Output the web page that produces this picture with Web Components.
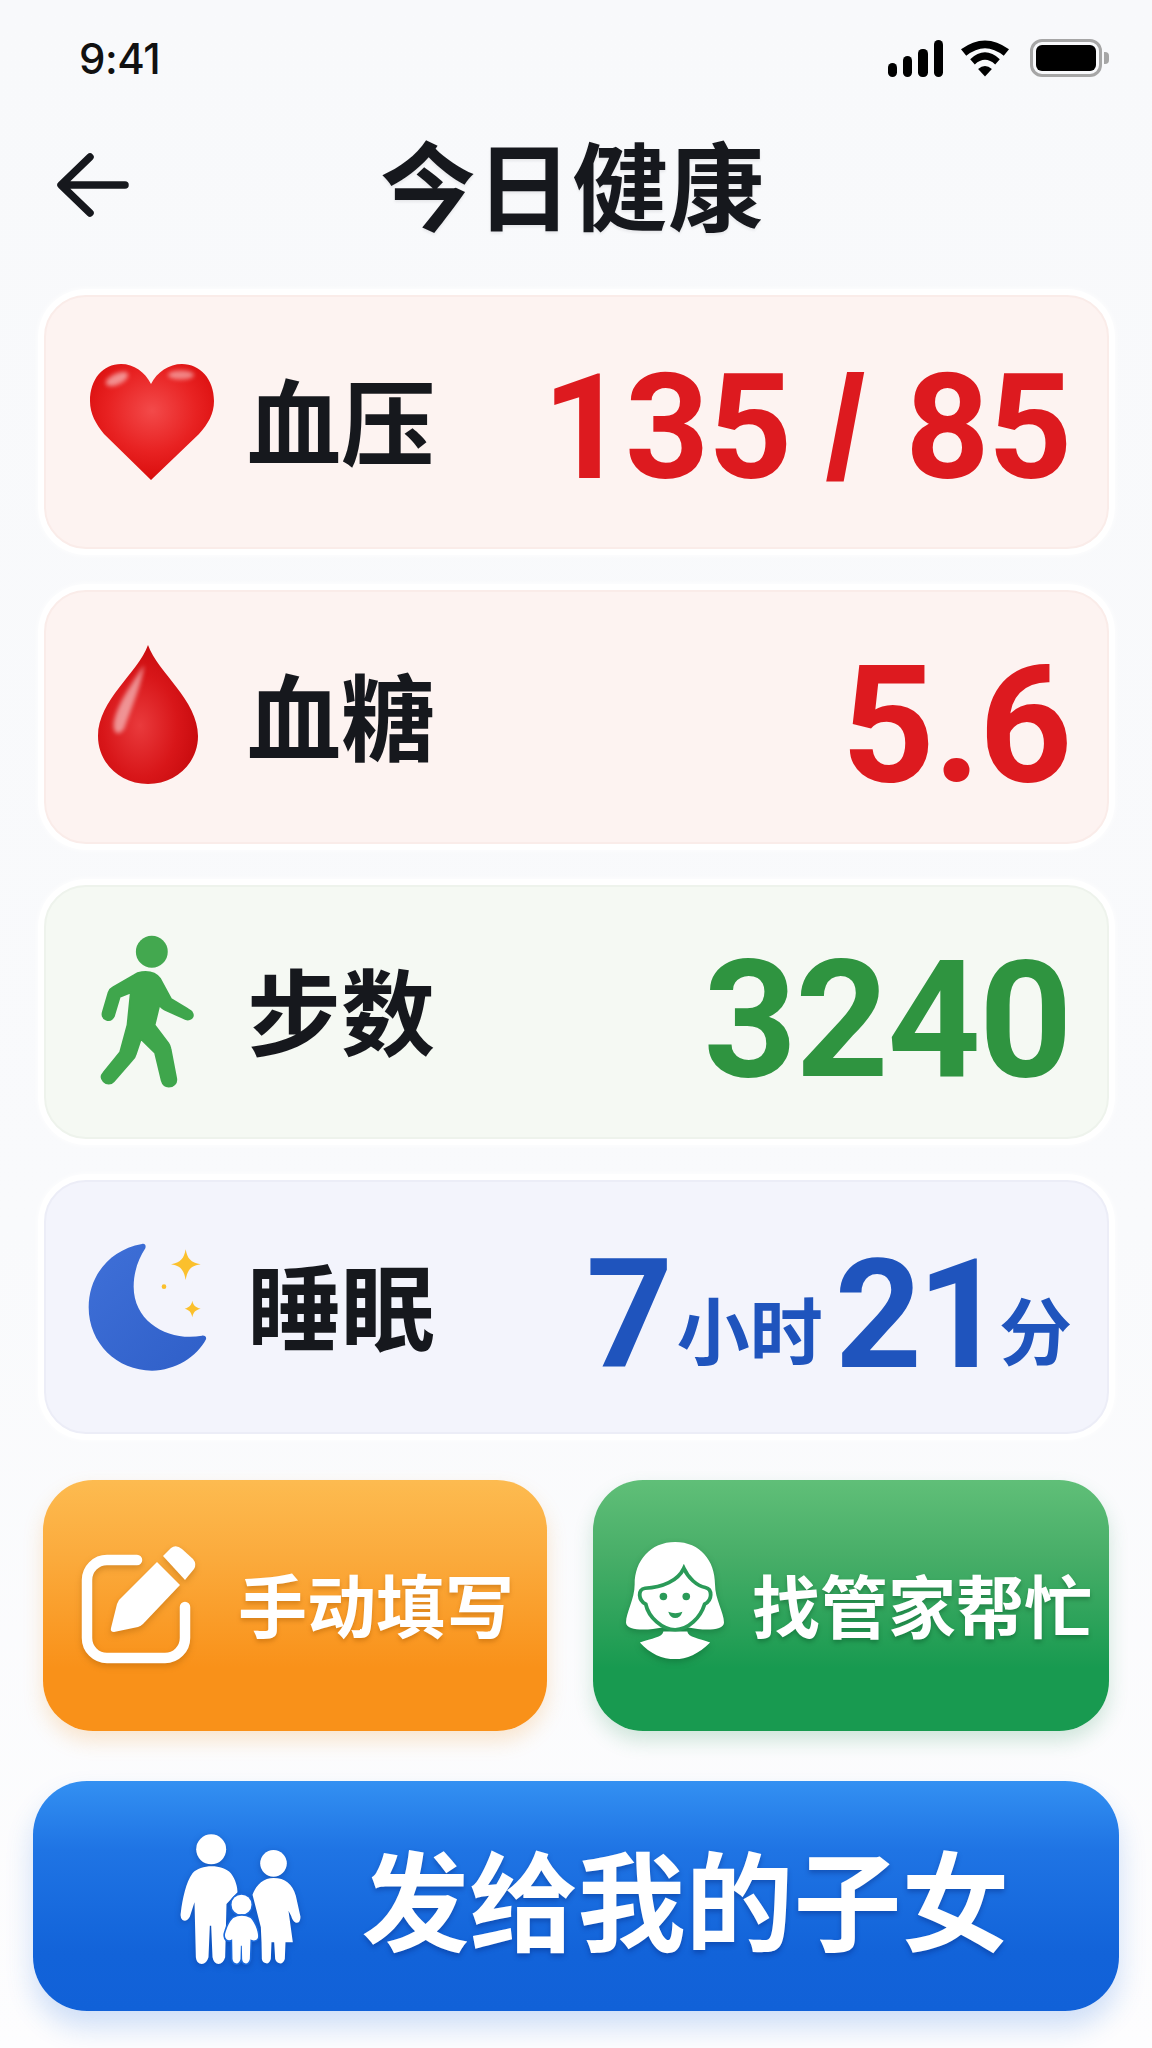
<!DOCTYPE html>
<html lang="zh-CN">
<head>
<meta charset="utf-8">
<title>今日健康</title>
<style>
    html, body {
        margin: 0;
        padding: 0;
    }
    body {
        width: 1152px;
        height: 2048px;
        overflow: hidden;
        background: linear-gradient(180deg, #f8f9fb 0%, #f9fafc 60%, #fdfdfe 100%);
        font-family: "Noto Sans CJK SC", "Liberation Sans", sans-serif;
    }
</style>
</head>
<body>
<health-page>
    <health-status-bar slot="status" time="9:41"></health-status-bar>
    <health-header slot="header" title="今日健康"></health-header>

    <health-card tone="red" label="血压" style="--value-pad:12px">
        <health-icon slot="icon" name="heart"></health-icon>
        135 <span style="font-family:'Liberation Sans',sans-serif;margin-left:-1px;margin-right:6px">/</span> 85
    </health-card>
    <health-card tone="red" label="血糖" size="big">
        <health-icon slot="icon" name="drop" style="margin:0 8px 6px 0"></health-icon>
        5.6
    </health-card>
    <health-card tone="green" label="步数" size="big">
        <health-icon slot="icon" name="walker" style="margin:0 9px 2px 0"></health-icon>
        3240
    </health-card>
    <health-card tone="blue" label="睡眠" size="mid">
        <health-icon slot="icon" name="moon" style="margin:0 10px 0 0"></health-icon>
        <sleep-value hours="7" minutes="21"></sleep-value>
    </health-card>

    <action-button slot="actions" tone="orange" width="504" gap="43" pad="39">
        <health-icon slot="icon" name="edit" style="margin-bottom:3px"></health-icon>
        手动填写
    </action-button>
    <action-button slot="actions" tone="green" width="516" gap="28" pad="33">
        <health-icon slot="icon" name="woman" style="margin-bottom:10px"></health-icon>
        找管家帮忙
    </action-button>

    <send-button slot="send">
        <health-icon slot="icon" name="family" style="margin-top:5px"></health-icon>
        发给我的子女
    </send-button>
</health-page>

<script>
const HEALTH_ICONS = {
    heart: {w: 124, h: 116, svg: `
        <svg viewBox="0 0 124 116" width="124" height="116">
            <defs>
                <radialGradient id="hg" cx="50%" cy="40%" r="64%">
                    <stop offset="0" stop-color="#f34a4a"/>
                    <stop offset=".55" stop-color="#e82222"/>
                    <stop offset=".88" stop-color="#dc1010"/>
                    <stop offset="1" stop-color="#c40606"/>
                </radialGradient>
                <filter id="hb" x="-40%" y="-40%" width="180%" height="180%"><feGaussianBlur stdDeviation="2"/></filter>
            </defs>
            <path fill="url(#hg)" d="M61 20C55 8 44 0 31 0 13 0 0 15 0 37 0 50 6 60 14 70L61 116 109 70C118 60 124 50 124 37 124 15 110 0 92 0 79 0 67 8 61 20Z"/>
            <ellipse cx="27" cy="15" rx="12" ry="5.500" transform="rotate(-25 27 15)" fill="#fff" opacity=".5" filter="url(#hb)"/>
            <ellipse cx="91" cy="11" rx="13" ry="4.500" fill="#fff" opacity=".45" filter="url(#hb)"/>
        </svg>`},
    drop: {w: 100, h: 139, svg: `
        <svg viewBox="0 0 100 139" width="100" height="139">
            <defs>
                <radialGradient id="dg" cx="42%" cy="58%" r="62%">
                    <stop offset="0" stop-color="#e93a3c"/>
                    <stop offset=".6" stop-color="#d81619"/>
                    <stop offset="1" stop-color="#c70a0d"/>
                </radialGradient>
                <filter id="db" x="-60%" y="-30%" width="220%" height="160%"><feGaussianBlur stdDeviation="2.2"/></filter>
            </defs>
            <path fill="url(#dg)" d="M50 0C60 28 100 55 100 91 100 118 78 139 50 139 22 139 0 118 0 91 0 55 40 28 50 0Z"/>
            <path fill="#fff" opacity=".5" filter="url(#db)" d="M46 20C44 40 34 60 26 84 20 92 14 88 16 76 20 58 34 38 46 20Z"/>
        </svg>`},
    walker: {w: 93, h: 153, svg: `
        <svg viewBox="92 75 280 458" width="93" height="153" style="overflow:visible">
            <circle cx="245" cy="124" r="48" fill="#43a84f"/>
            <path fill="#3fa64c" stroke="#3fa64c" stroke-width="6" stroke-linejoin="round" d="M215 186C240 183 260 192 270 206L303 267 353 297C369 305 372 317 364 324 356 330 348 328 341 324L284 298C275 294 271 290 268 282L253 345 294 399C298 405 300 410 301 416L318 505C321 520 309 530 296 530 285 530 278 523 275 512L255 428 212 386 197 431C195 439 191 445 185 451L130 514C121 524 109 523 100 514 91 505 93 496 100 488L150 426 172 345 182 246 148 260 131 317C126 328 118 332 108 328 98 324 95 315 98 305L115 247C117 240 121 235 127 232L191 195C198 190 206 187 215 186Z"/>
        </svg>`},
    moon: {w: 120, h: 128, svg: `
        <svg viewBox="85 70 360 382" width="120" height="128">
            <defs>
                <linearGradient id="mg" x1="0" y1="0" x2="1" y2="1">
                    <stop offset="0" stop-color="#3f70d8"/>
                    <stop offset="1" stop-color="#2f5fc8"/>
                </linearGradient>
            </defs>
            <path fill="url(#mg)" d="M250 72C150 90 90 170 90 262 90 370 175 452 280 452 350 452 415 410 442 358 444 350 438 346 430 347 335 365 225 310 225 200 225 155 240 115 260 85 263 75 258 70 250 72Z"/>
            <path fill="#fbc02d" d="M381 88C386 116 396 128 426 133 396 138 386 150 381 180 376 150 366 138 337 133 366 128 376 116 381 88Z"/>
            <path fill="#fbc02d" d="M401 242C404 256 410 262 426 266 410 270 404 276 401 292 398 276 392 270 378 266 392 262 398 256 401 242Z"/>
            <circle cx="316" cy="200" r="7" fill="#fbc02d"/>
        </svg>`},
    edit: {w: 113, h: 117, svg: `
        <svg viewBox="0 0 115 117" width="115" height="117" style="overflow:visible;filter:drop-shadow(0 3px 3px rgba(150,80,0,.35))">
            <path fill="none" stroke="#fff" stroke-width="10.5" stroke-linecap="round" d="M55 14H25A20 20 0 0 0 5 34V92A20 20 0 0 0 25 112H83A20 20 0 0 0 103 92V61"/>
            <path fill="#fff" d="M75 16L98 39 61 78Q59 80 56 81L32 86Q28 86 29 82L35 58Q36 56 37 54Z"/>
            <path fill="#fff" d="M81 10L89 2Q94-2 100 3L111 13Q115 18 112 23L103 34Z"/>
        </svg>`},
    woman: {w: 98, h: 117, svg: `
        <svg viewBox="135 213 283 352" width="98" height="117" preserveAspectRatio="none" style="overflow:visible;filter:drop-shadow(0 3px 3px rgba(0,70,30,.3))">
            <path fill="#fff" d="M175 515C210 502 240 500 243 482L312 482C315 500 345 502 378 515 345 550 310 565 277 565 240 565 205 550 175 515Z"/>
            <path fill="#fff" d="M277 213C205 213 160 270 160 340 160 385 135 425 135 455 135 480 195 480 240 470L315 470C360 480 418 480 418 455 418 425 392 385 392 340 392 270 350 213 277 213Z"/>
            <path fill="#fff" stroke="#2a9a58" stroke-width="11" d="M302 292C285 330 240 350 190 352 168 355 170 388 192 400 200 440 240 477 277 477 315 477 350 440 362 400 385 388 385 355 364 350 340 345 315 322 302 292Z"/>
            <circle cx="243" cy="377" r="11" fill="#2a9a58"/>
            <circle cx="309" cy="377" r="11" fill="#2a9a58"/>
            <path fill="#2a9a58" d="M257 423Q277 431 298 423 292 442 277 442 263 442 257 423Z"/>
        </svg>`},
    family: {w: 121, h: 130, svg: `
        <svg viewBox="483 190 362 390" width="121" height="130" style="overflow:visible;filter:drop-shadow(0 2px 3px rgba(0,30,110,.3))">
            <circle cx="576" cy="236" r="45" fill="#fff"/>
            <path fill="#fff" d="M520 308C545 280 610 280 635 308 650 328 655 350 655 365L622 400 618 560Q612 580 598 580 584 580 580 560L576 465 572 465 568 560Q562 580 548 580 532 580 530 560L526 395 512 438Q502 455 490 448 482 442 485 425C490 385 500 335 520 308Z"/>
            <circle cx="763" cy="278" r="40" fill="#fff"/>
            <path fill="#fff" d="M700 372C712 340 735 322 763 322 798 322 820 340 830 375L844 438Q844 458 830 456 820 452 816 436L808 420 821 515 799 515 797 565Q792 580 781 578 772 576 768 565L765 515 757 515 755 565Q750 580 741 578 730 576 728 565L727 515 725 470Z"/>
            <g stroke="#1a69dc" stroke-width="10" paint-order="stroke" stroke-linejoin="round" fill="#fff">
                <circle cx="667" cy="402" r="30"/>
                <path d="M642 442Q668 428 694 442C708 456 720 488 716 502 710 512 700 510 694 506L692 565Q688 580 678 578 670 576 669 565L668 525 665 525 664 565Q660 580 650 578 642 576 640 565L639 506Q630 512 622 506 614 498 620 482 628 456 642 442Z"/>
            </g>
        </svg>`}
};

class HealthIcon extends HTMLElement {
    constructor() {
        super();
        this.attachShadow({mode: 'open'});
    }
    connectedCallback() {
        const icon = HEALTH_ICONS[this.getAttribute('name')];
        this.shadowRoot.innerHTML = `<style>:host{display:block;line-height:0;width:${icon.w}px;height:${icon.h}px}svg{display:block}</style>${icon.svg}`;
    }
}
customElements.define('health-icon', HealthIcon);

const HealthPageTemplate = document.createElement('template');
HealthPageTemplate.innerHTML = `
    <style>
        :host {
            display: block;
            box-sizing: border-box;
            width: 1152px;
            height: 2048px;
            padding: 0 33px;
            color: #16181d;
        }
        .cards {
            display: flex;
            flex-direction: column;
            gap: 41px;
            margin: 25px 10px 0 11px;
        }
        .actions {
            display: flex;
            justify-content: space-between;
            margin: 46px 10px 0 10px;
        }
        .send {
            margin-top: 50px;
        }
    </style>
    <slot name="status"></slot>
    <slot name="header"></slot>
    <div class="cards"><slot></slot></div>
    <div class="actions"><slot name="actions"></slot></div>
    <div class="send"><slot name="send"></slot></div>
`;
class HealthPage extends HTMLElement {
    constructor() {
        super();
        this.attachShadow({mode: 'open'});
        this.shadowRoot.appendChild(HealthPageTemplate.content.cloneNode(true));
    }
}
customElements.define('health-page', HealthPage);

const StatusBarTemplate = document.createElement('template');
StatusBarTemplate.innerHTML = `
    <style>
        :host {
            display: flex;
            align-items: center;
            justify-content: space-between;
            box-sizing: border-box;
            height: 100px;
            padding: 18px 10px 0 46px;
        }
        .time {
            font: 500 42px/1 "Inter", "Liberation Sans", sans-serif;
            color: #111;
            letter-spacing: -.5px;
        }
        .icons {
            display: flex;
            align-items: center;
            margin-top: -2px;
        }
        .bars {
            display: flex;
            align-items: flex-end;
            gap: 6px;
            height: 37px;
            margin-right: 18px;
        }
        .bars i {
            display: block;
            width: 9.300px;
            border-radius: 4.500px;
            background: #000;
        }
        .wifi {
            margin-right: 21px;
        }
        .battery {
            display: flex;
            align-items: center;
            gap: 2px;
        }
        .shell {
            box-sizing: border-box;
            width: 72px;
            height: 38px;
            padding: 3px;
            border: 3px solid #a6a6a6;
            border-radius: 12px;
        }
        .shell i {
            display: block;
            height: 100%;
            border-radius: 6px;
            background: #000;
        }
        .nub {
            width: 5px;
            height: 12px;
            border-radius: 0 4px 4px 0;
            background: #a6a6a6;
        }
        svg {
            display: block;
        }
    </style>
    <span class="time"></span>
    <div class="icons">
        <div class="bars"><i style="height:14px"></i><i style="height:21px"></i><i style="height:28px"></i><i style="height:37px"></i></div>
        <svg class="wifi" viewBox="272 45 146 110" width="48" height="37">
            <path d="M272 72Q345 18 418 72L402 92Q345 46 288 92Z"/>
            <path d="M300 102Q345 60 390 102L376 118Q345 90 314 118Z"/>
            <path d="M345 155L324 132Q345 114 366 132Z"/>
        </svg>
        <div class="battery"><div class="shell"><i></i></div><div class="nub"></div></div>
    </div>
`;
class HealthStatusBar extends HTMLElement {
    constructor() {
        super();
        this.attachShadow({mode: 'open'});
        this.shadowRoot.appendChild(StatusBarTemplate.content.cloneNode(true));
    }
    connectedCallback() {
        this.shadowRoot.querySelector('.time').textContent = this.getAttribute('time');
    }
}
customElements.define('health-status-bar', HealthStatusBar);

const HeaderTemplate = document.createElement('template');
HeaderTemplate.innerHTML = `
    <style>
        :host {
            display: grid;
            grid-template-columns: 120px 1fr 120px;
            align-items: center;
            height: 170px;
        }
        svg {
            display: block;
            margin-left: 24px;
        }
        h1 {
            margin: -6px 0 0;
            text-align: center;
            font: 700 96px/1 "Noto Sans CJK SC", "Liberation Sans", sans-serif;
            color: #16181d;
            transform: translateX(-4px);
            text-shadow: 0 2px 3px rgba(20, 24, 40, .08);
        }
    </style>
    <svg viewBox="0 0 72 64" width="72" height="64" fill="none" stroke="#16181d" stroke-width="7.500" stroke-linecap="round" stroke-linejoin="round">
        <path d="M33 4L4 32 33 60M5 32H68"/>
    </svg>
    <h1></h1>
    <span></span>
`;
class HealthHeader extends HTMLElement {
    constructor() {
        super();
        this.attachShadow({mode: 'open'});
        this.shadowRoot.appendChild(HeaderTemplate.content.cloneNode(true));
    }
    connectedCallback() {
        this.shadowRoot.querySelector('h1').textContent = this.getAttribute('title');
    }
}
customElements.define('health-header', HealthHeader);

const HealthCardTemplate = document.createElement('template');
HealthCardTemplate.innerHTML = `
    <style>
        :host {
            display: flex;
            align-items: center;
            box-sizing: border-box;
            height: 254px;
            padding: 0 36px 0 44px;
            border-radius: 42px;
            border: 2px solid var(--edge);
            background: var(--fill);
            box-shadow: 0 0 0 6px rgba(255, 255, 255, .9), 0 0 5px 7px rgba(255, 255, 255, .7);
            color: var(--ink);
        }
        :host([tone="red"]) { --fill: #fdf3f1; --edge: #faece9; --ink: #dd1a1f; }
        :host([tone="green"]) { --fill: #f5f9f3; --edge: #eef3ec; --ink: #2f9440; }
        :host([tone="blue"]) { --fill: #f3f4fc; --edge: #ecedf7; --ink: #1f54bd; }
        .icon {
            display: flex;
            justify-content: center;
            align-items: center;
            flex: none;
            width: 124px;
        }
        .label {
            margin: 0 0 8px 33px;
            font: 700 94px/1 "Noto Sans CJK SC", "Liberation Sans", sans-serif;
            color: #16181d;
            white-space: nowrap;
        }
        .value {
            margin-left: auto;
            padding-top: var(--value-pad, 16px);
            font: 700 147px/1 "Roboto", "Liberation Sans", "Noto Sans CJK SC", sans-serif;
            letter-spacing: -.01em;
            white-space: nowrap;
        }
        :host([size="big"]) .value {
            font-size: 163px;
        }
        :host([size="mid"]) .value {
            font-size: 152px;
            letter-spacing: -.03em;
        }
    </style>
    <div class="icon"><slot name="icon"></slot></div>
    <div class="label"></div>
    <div class="value"><slot></slot></div>
`;
class HealthCard extends HTMLElement {
    constructor() {
        super();
        this.attachShadow({mode: 'open'});
        this.shadowRoot.appendChild(HealthCardTemplate.content.cloneNode(true));
    }
    connectedCallback() {
        this.shadowRoot.querySelector('.label').textContent = this.getAttribute('label');
    }
}
customElements.define('health-card', HealthCard);

const SleepValueTemplate = document.createElement('template');
SleepValueTemplate.innerHTML = `
    <style>
        :host {
            display: flex;
            align-items: baseline;
        }
        small {
            font: 700 73px/1 "Noto Sans CJK SC", "Liberation Sans", sans-serif;
            letter-spacing: 0;
            margin: 0 12px 0 8px;
            transform: translateY(-8px);
        }
        small:last-child {
            margin: 0 -1px 0 -1px;
        }
    </style>
    <span id="h"></span><small>小时</small><span id="m"></span><small>分</small>
`;
class SleepValue extends HTMLElement {
    constructor() {
        super();
        this.attachShadow({mode: 'open'});
        this.shadowRoot.appendChild(SleepValueTemplate.content.cloneNode(true));
    }
    connectedCallback() {
        this.shadowRoot.getElementById('h').textContent = this.getAttribute('hours');
        this.shadowRoot.getElementById('m').textContent = this.getAttribute('minutes');
    }
}
customElements.define('sleep-value', SleepValue);

const ActionButtonTemplate = document.createElement('template');
ActionButtonTemplate.innerHTML = `
    <style>
        :host {
            display: flex;
            align-items: center;
            box-sizing: border-box;
            height: 251px;
            border-radius: 50px;
            background: linear-gradient(180deg, var(--top) 0%, var(--mid) 30%, var(--low) 75%, var(--low) 100%);
            box-shadow: 0 10px 20px var(--drop);
            color: #fff;
            cursor: pointer;
            font: 700 69px/1 "Noto Sans CJK SC", "Liberation Sans", sans-serif;
            text-shadow: 0 3px 4px var(--drop-text);
            white-space: nowrap;
        }
        :host([tone="orange"]) { --top: #fdbb50; --mid: #fbab3d; --low: #f99119; --drop: rgba(240, 150, 40, .22); --drop-text: rgba(170, 90, 0, .4); }
        :host([tone="green"]) { --top: #60bf78; --mid: #48ae68; --low: #189a50; --drop: rgba(30, 140, 80, .2); --drop-text: rgba(0, 70, 30, .35); font-size: 68px; }
        .text {
            margin-bottom: 4px;
        }
    </style>
    <slot name="icon"></slot>
    <span class="text"><slot></slot></span>
`;
class ActionButton extends HTMLElement {
    constructor() {
        super();
        this.attachShadow({mode: 'open'});
        this.shadowRoot.appendChild(ActionButtonTemplate.content.cloneNode(true));
    }
    connectedCallback() {
        this.style.width = this.getAttribute('width') + 'px';
        this.style.paddingLeft = this.getAttribute('pad') + 'px';
        this.shadowRoot.querySelector('.text').style.marginLeft = this.getAttribute('gap') + 'px';
    }
}
customElements.define('action-button', ActionButton);

const SendButtonTemplate = document.createElement('template');
SendButtonTemplate.innerHTML = `
    <style>
        :host {
            display: flex;
            align-items: center;
            justify-content: center;
            gap: 60px;
            box-sizing: border-box;
            height: 230px;
            padding-left: 38px;
            border-radius: 54px;
            background: linear-gradient(180deg, #3390f2 0%, #1f74e4 30%, #1263d9 75%, #1161d8 100%);
            box-shadow: 0 16px 28px rgba(20, 100, 220, .2);
            color: #fff;
            cursor: pointer;
            font: 700 108px/1 "Noto Sans CJK SC", "Liberation Sans", sans-serif;
            text-shadow: 0 3px 5px rgba(0, 30, 110, .35);
            white-space: nowrap;
        }
    </style>
    <slot name="icon"></slot>
    <span><slot></slot></span>
`;
class SendButton extends HTMLElement {
    constructor() {
        super();
        this.attachShadow({mode: 'open'});
        this.shadowRoot.appendChild(SendButtonTemplate.content.cloneNode(true));
    }
}
customElements.define('send-button', SendButton);
</script>
</body>
</html>
